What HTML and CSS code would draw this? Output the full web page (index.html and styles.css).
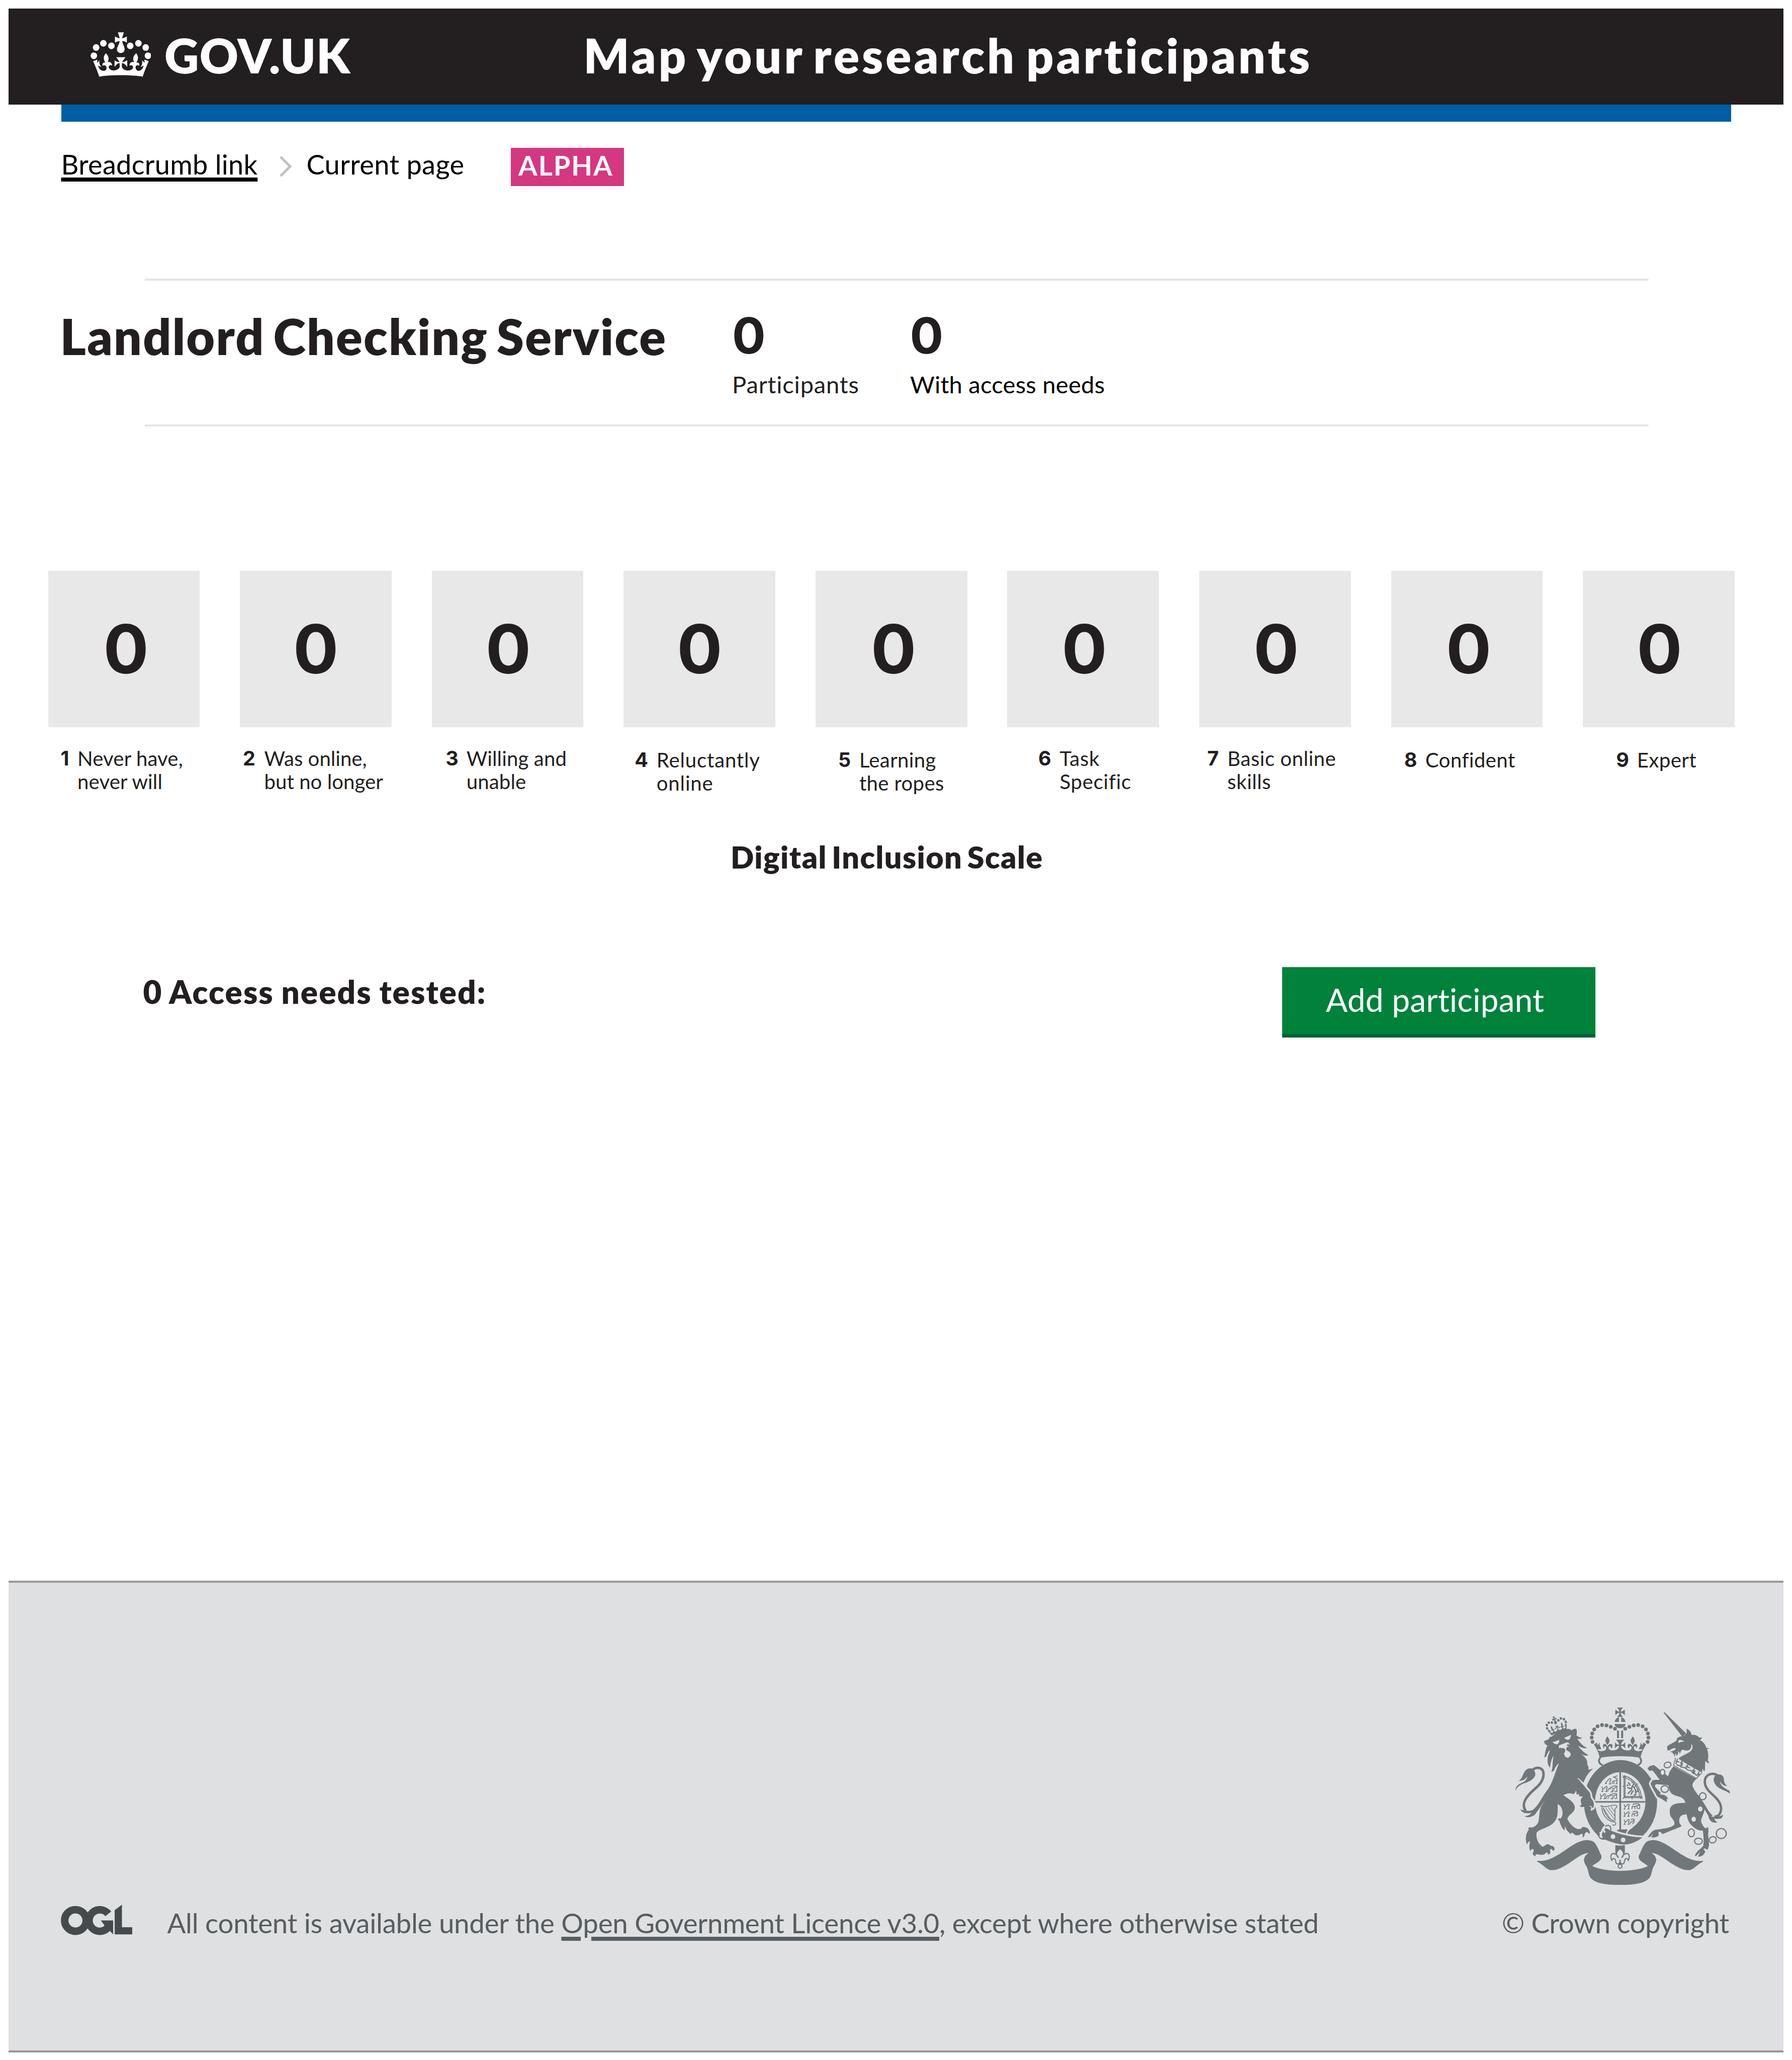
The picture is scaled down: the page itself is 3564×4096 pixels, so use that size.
FILE: index.html
```html
<!DOCTYPE html>
<html lang="en">
<head>
<meta charset="utf-8">
<title>Map your research participants</title>
<link rel="stylesheet" href="styles.css">
</head>
<body>
<header class="header">
  <a class="logo">
    <svg class="logo-crown" viewBox="81 82 325 320" preserveAspectRatio="none" aria-hidden="true">
      <g id="crown">
        <ellipse cx="150" cy="162" rx="17.5" ry="24"/><ellipse cx="193" cy="180" rx="17.5" ry="24"/><ellipse cx="111" cy="192" rx="17.5" ry="24"/><ellipse cx="99" cy="251" rx="17.5" ry="24"/>
        <ellipse cx="338" cy="162" rx="17.5" ry="24"/><ellipse cx="294" cy="180" rx="17.5" ry="24"/><ellipse cx="377" cy="192" rx="17.5" ry="24"/><ellipse cx="389" cy="251" rx="17.5" ry="24"/>
        <path d="M228 83H260L250 126C262 124 270 118 276 113V158C268 150 262 146 251 146C252 165 264 185 264 205C264 222 254 232 243 232C232 232 223 222 223 205C224 185 237 165 237 146C228 146 220 152 212 158V113C218 118 226 124 238 126Z"/>
        <path d="M95 290L118 279L116 302L130 283C126 300 128 312 140 333L122 322C125 345 138 360 152 360C168 358 172 335 162 323C155 316 148 320 146 324C142 305 152 298 162 300C150 285 148 255 163 234C180 252 182 280 172 298C185 292 197 302 197 322C190 317 184 318 180 326C174 342 190 357 207 357C225 355 240 340 238 325L237 304C228 302 222 312 210 331V283C220 295 228 296 237 296L219 262H269L250 296C260 296 268 292 278 283V331C268 315 262 304 250 304L249 325C249 343 262 357 282 357C300 357 314 342 308 328C304 318 298 317 290 322C290 302 300 292 316 298C306 280 308 252 326 234C340 254 338 285 326 300C338 298 346 306 342 324C338 318 332 316 326 322C318 338 326 358 338 360C352 358 362 345 366 322L349 333C360 312 360 300 357 283L371 302L370 279L393 290C385 318 368 370 361 402C325 387 165 387 128 402C122 375 105 320 95 290Z"/>
      </g>
    </svg>
    <span class="logo-text">GOV.UK</span>
  </a>
  <span class="header-title">Map your research participants</span>
</header>
<div class="header-bar"></div>

<nav class="breadcrumbs">
  <a class="crumb-link">Breadcrumb link</a>
  <svg class="chevron" viewBox="0 0 26 42" aria-hidden="true"><path d="M3 2L22 21L3 40"/></svg>
  <span class="crumb-current">Current page</span>
  <strong class="phase-tag">ALPHA</strong>
</nav>

<section class="summary">
  <h1 class="service-name">Landlord Checking Service</h1>
  <div class="stat"><span class="stat-value">0</span><span class="stat-label">Participants</span></div>
  <div class="stat stat-dark"><span class="stat-value">0</span><span class="stat-label">With access needs</span></div>
</section>

<main>
  <ol class="scale">
    <li class="level"><div class="tile">0</div><div class="level-label"><b>1</b><span>Never have,<br>never will</span></div></li>
    <li class="level"><div class="tile">0</div><div class="level-label"><b>2</b><span>Was online,<br>but no longer</span></div></li>
    <li class="level"><div class="tile">0</div><div class="level-label"><b>3</b><span>Willing and<br>unable</span></div></li>
    <li class="level low"><div class="tile">0</div><div class="level-label"><b>4</b><span>Reluctantly<br>online</span></div></li>
    <li class="level low"><div class="tile">0</div><div class="level-label"><b>5</b><span>Learning<br>the ropes</span></div></li>
    <li class="level"><div class="tile">0</div><div class="level-label"><b>6</b><span>Task<br>Specific</span></div></li>
    <li class="level"><div class="tile">0</div><div class="level-label"><b>7</b><span>Basic online<br>skills</span></div></li>
    <li class="level low"><div class="tile">0</div><div class="level-label"><b>8</b><span>Confident</span></div></li>
    <li class="level low"><div class="tile">0</div><div class="level-label"><b>9</b><span>Expert</span></div></li>
  </ol>
  <h2 class="scale-title">Digital Inclusion Scale</h2>
  <div class="actions">
    <h2 class="needs">0 Access needs tested:</h2>
    <a class="button" role="button">Add participant</a>
  </div>
</main>

<footer class="footer">
  <svg class="ogl" viewBox="46 62 516 220" role="img" aria-label="OGL">
    <circle class="ogl-ring" cx="151" cy="176" r="77.5"/>
    <path class="ogl-ring" d="M387 128.6A77.5 77.5 0 1 0 381 231"/>
    <path d="M333 176H422V276L398 251L362 235L358 208Z"/>
    <path d="M433 102L485 63V225H560V276H433Z"/>
  </svg>
  <p class="licence">All content is available under the <a class="licence-link">Open Government Licence v3.0</a>, except where otherwise stated</p>
  <div class="crest">
    <svg class="arms" viewBox="110 75 1560 1290" aria-hidden="true">
      <!-- garter and quartered shield -->
      <ellipse cx="872" cy="763" rx="263" ry="303"/>
      <ellipse class="bg" cx="870" cy="759" rx="181" ry="212"/>
      <path d="M690 755H1050V766H690ZM864 547H876V965H864Z"/>
      <g class="line">
        <path d="M722 738H736M730 738L732 720L726 704M732 720C744 724 746 706 756 704C766 702 768 714 758 718L762 738H750M798 722C800 706 804 700 810 712C816 722 830 716 844 706V736H830M802 738H816L812 724M824 722V734M812 706C826 696 844 700 844 706M770 738C768 722 776 712 786 720L796 708M780 738L788 726"/>
        <path d="M734 686H748M742 686L744 668L738 650M744 668C756 672 758 652 768 650C778 648 780 662 770 666L774 686H762M798 670C800 654 804 648 810 660C816 670 830 664 846 650V686H830M802 688H816L812 672M824 670V684M812 652C826 642 846 646 846 652M782 684C780 670 788 660 798 668"/>
        <path d="M760 628H774M768 628L770 614M770 614C782 618 780 598 792 594C806 590 806 606 796 610L800 632H788M812 632C812 616 818 606 826 612L846 604V630H836M824 632V616M846 604C858 586 830 594 820 580C830 586 840 576 850 572"/>
        <path d="M897 580V730H1022M905 588V722H1010M897 574C970 590 1018 660 1022 730M905 590C965 604 1005 660 1010 722M888 572L910 588M888 588L906 570M888 738L908 722M1012 738L1030 722M1012 722L1030 738M886 650H908M955 718V742M978 640L996 630"/>
        <path d="M926 622C934 626 940 636 940 644M952 622C966 614 972 630 962 640L950 660C944 668 930 662 920 656M950 660C958 676 944 684 932 694L926 704M960 650C976 660 990 690 978 712L966 712M972 652L986 646M966 680C950 690 956 704 944 706M976 690C1000 690 1000 670 990 660M930 640L916 642" stroke-width="9"/>
        <path d="M728 788C770 806 800 782 836 784C852 786 846 802 836 806M738 798C740 850 770 900 832 906C846 920 830 936 814 924M832 806V900M748 802C760 850 790 890 826 896"/>
        <path d="M764 802L828 886M784 800L830 862M804 796L830 832M750 808L800 884" stroke-width="4"/>
        <g transform="translate(894 922) scale(.97 1) translate(-722 -738)">
          <path d="M722 738H736M730 738L732 720L726 704M732 720C744 724 746 706 756 704C766 702 768 714 758 718L762 738H750M770 738C770 722 778 716 784 722L800 706V722L788 736M776 706C786 696 800 700 802 706"/>
          <path d="M722 680H736M730 680L732 664L726 648M732 664C744 668 746 650 756 648C766 646 768 658 758 662L762 680H750M784 682C784 664 790 654 798 664L826 652V676H812M802 680V664M790 650C806 640 826 644 826 652"/>
          <path d="M722 628H736M730 628L732 610L726 594M732 610C744 614 746 596 756 594C766 592 768 606 758 610L762 628H750M784 628C784 610 790 600 798 612L842 598V624H828M806 628V612M822 626V608M790 594C806 588 842 590 842 598"/>
        </g>
      </g>
      <path d="M846 966C866 950 890 962 920 957L912 990L870 980Z"/>
      <path class="bg-line" d="M915 992C920 966 935 955 960 940" stroke-width="10"/>
      <path class="halo" d="M760 945C830 985 930 1014 1030 1016C985 1050 940 1067 890 1067C840 1062 790 1045 728 1016C745 1000 735 975 760 945Z"/>
      <circle class="bg" cx="818" cy="1010" r="17"/><circle class="bg" cx="891" cy="1034" r="17"/>
      <path class="bg-line" d="M724 978C736 990 726 1004 740 1018M762 948C744 950 750 972 762 980" stroke-width="13"/>
      <path class="line" d="M764 938C778 918 808 934 802 964M724 958C698 985 712 1034 760 1028" stroke-width="8"/>
      <!-- crown and ribbon, drawn as mirrored halves -->
      <g id="half">
        <circle cx="671" cy="330" r="13.5"/><circle cx="665" cy="299" r="13.5"/><circle cx="669" cy="269" r="13.5"/><circle cx="683" cy="240" r="13.5"/><circle cx="707" cy="218" r="13.5"/><circle cx="739" cy="209" r="13.5"/><circle cx="771" cy="211" r="13.5"/><circle cx="802" cy="221" r="13.5"/><circle cx="832" cy="235" r="13.5"/>
        <path d="M870 83H847C860 93 863 105 865 113C853 112 845 106 835 97V138C845 128 853 121 865 120C863 130 860 140 847 150H870ZM861 153C845 155 832 170 830 186H861ZM829 201H870V231C848 231 833 220 829 201ZM847 246L861 250V303H847Z"/>
        <path d="M681 349L702 334L708 355L722 333C720 355 728 368 736 381L706 383C712 395 740 402 760 390C772 383 772 366 765 361C758 358 753 364 755 376C742 368 742 348 757 344C768 343 772 352 776 362H780C784 350 795 340 808 345C820 355 816 370 803 377C804 363 798 358 791 362C782 370 784 390 815 391C840 392 862 380 862 358C850 357 842 364 832 377V332C842 343 850 350 862 349C860 335 852 325 838 314H870V433C820 432 770 434 722 444C718 415 700 375 681 349Z"/>
        <path d="M777 290C768 305 762 315 764 324C768 338 774 345 778 352C784 345 792 335 794 320C791 310 785 300 777 290Z"/>
        <path class="line" d="M728 441C708 465 718 488 745 497" stroke-width="13"/>
        <path d="M272 1183C350 1195 420 1145 500 1090C560 1050 620 1018 675 1045C700 1060 715 1110 734 1145C745 1185 690 1200 669 1222C720 1245 790 1256 870 1256V1357C760 1357 690 1345 656 1305C638 1275 642 1245 625 1220C600 1180 605 1155 642 1127C590 1130 540 1180 480 1215C430 1245 400 1254 365 1250C330 1238 310 1205 275 1191Z"/>
        <path d="M835 1071L870 1076V1100C858 1110 845 1124 847 1138L852 1150L835 1140Z"/>
        <path class="line" d="M836 1138C812 1118 792 1146 810 1180C818 1158 836 1166 838 1190C842 1212 856 1210 869 1196" stroke-width="8"/>
        <path d="M842 1135C856 1145 862 1158 858 1164C848 1164 842 1150 842 1135ZM864 1176H870V1210H864Z"/>
      </g>
      <use href="#half" transform="translate(1738 0) scale(-1 1)"/>
      <circle class="line bg-fill" cx="869" cy="1223" r="14" stroke-width="8"/>
      <!-- lion -->
      <use href="#crown" transform="translate(410 206) rotate(-19) scale(.49 .39) translate(-243 -242)"/>
      <path class="halo" d="M557 592L572 600L648 690C658 705 655 725 662 738C674 752 682 768 679 778C680 795 676 803 670 806C668 795 660 790 650 788L600 700Z"/>
      <path d="M322 326C338 314 358 316 360 303C364 294 368 290 374 294C410 262 450 250 495 236L516 240L514 248C530 240 545 232 555 237C559 255 560 268 555 282C570 296 582 300 597 297C590 308 575 310 562 307C580 335 605 362 632 374C610 380 590 370 565 356C590 388 615 412 642 424C625 434 605 425 588 415C612 435 630 450 633 475L634 494C642 505 643 515 642 530C652 528 662 524 675 523C645 545 622 580 606 622L572 592L557 592L648 690C656 705 655 725 662 738C674 750 682 765 679 780C680 795 678 803 671 806C670 795 662 784 652 788C640 796 668 794 662 808C654 814 645 802 636 796C626 796 634 806 636 813C622 812 614 804 612 794C598 802 582 798 578 785C588 790 596 780 588 765C582 745 592 730 603 722C590 722 580 722 574 718L572 702L558 710L552 676C548 695 540 704 533 705C510 694 485 698 462 713C500 740 545 765 544 805C540 840 500 850 490 882C505 915 540 955 575 956C590 955 592 950 596 942C620 938 650 950 653 985L645 992C642 980 635 975 626 978C612 984 618 995 606 1016L598 1008C604 996 600 988 588 990C580 1002 560 1002 545 998C535 990 530 984 523 982C516 984 518 990 518 994C500 980 480 965 474 936C470 945 472 955 470 966C445 945 440 915 432 896L421 886C428 876 438 882 446 876C462 850 460 795 421 777C420 830 425 870 400 900C370 945 300 950 270 980C262 1020 280 1065 313 1083C330 1078 335 1064 350 1065C362 1066 368 1075 372 1077C385 1074 400 1085 398 1100C394 1110 388 1114 384 1112C385 1100 375 1095 368 1102C362 1112 372 1118 366 1130C360 1140 354 1140 350 1136C352 1126 342 1120 334 1128C322 1145 300 1142 282 1138C265 1135 255 1138 264 1151C250 1150 238 1140 243 1125C250 1115 252 1100 240 1100C228 1100 228 1108 224 1114C212 1095 218 1065 222 1042C210 1045 206 1055 200 1067C186 1030 190 990 213 960C208 950 212 942 217 943C240 948 262 940 280 910C292 870 284 830 302 795L332 745C305 785 285 815 268 836C250 870 210 878 182 864C205 862 225 852 232 840C200 845 165 845 153 813C170 825 215 828 240 820C280 790 300 740 340 684C385 625 398 560 430 482C410 500 400 515 395 535L375 548C388 510 380 480 392 428C370 460 370 490 366 515C345 495 345 455 352 430C358 410 365 400 365 388C350 400 342 425 336 438L324 440C332 420 330 380 348 357C335 350 325 342 322 326Z"/>
      <path class="bg" d="M382 331C400 328 415 322 432 314C432 335 425 347 410 347C398 344 392 338 382 331ZM467 300C485 293 500 288 516 278C514 300 508 314 492 315C480 313 474 306 467 300ZM428 356L485 333C500 334 506 343 508 350C498 344 488 346 486 352C490 362 500 360 502 366C488 360 478 374 482 386C492 398 514 400 515 422C508 438 498 444 490 443C475 440 468 428 466 410C478 400 476 388 472 380C462 370 452 374 446 377C446 370 440 366 434 377C428 374 430 364 428 356Z"/>
      <path class="line" d="M238 530C285 500 325 520 318 575C308 640 250 665 215 708C172 755 168 790 190 825" stroke-width="18"/>
      <path d="M118 683C116 652 130 640 160 625C185 615 198 600 203 578C190 592 178 612 140 608C165 595 165 575 180 548C195 520 220 515 237 524C265 540 265 570 250 585C225 622 175 622 145 645C130 655 120 670 118 683Z"/>
      <!-- unicorn -->
      <g transform="translate(870 0)">
        <path class="halo" d="M345 640L262 632C245 640 248 645 250 652L290 695L285 710C310 705 335 715 345 743L335 735L333 762L300 740L266 722C255 700 230 660 219 630C225 612 235 605 240 603L283 602Z"/>
        <path d="M311 118L320 117L475 270L445 292Z"/>
        <path d="M440 290C460 285 478 275 477 262C480 250 478 242 475 235C495 240 510 260 513 280C540 276 556 286 566 296C575 300 580 299 587 298C585 310 578 315 570 315C600 330 612 350 618 370C625 376 632 375 638 374C634 382 628 380 623 380C635 410 633 440 630 463L640 481C628 482 618 475 612 465C607 490 612 515 607 540C598 540 598 530 592 522L588 545L578 552L418 450C450 420 518 410 520 368C520 355 515 346 511 346C513 372 505 392 478 392C460 392 452 382 442 388C432 400 432 405 432 413C424 414 424 395 416 398C420 420 408 428 400 428C406 412 400 410 396 420L390 437C388 430 388 422 384 418C382 408 376 414 370 412L380 404L358 404C372 392 396 392 400 378C390 370 365 380 360 388L341 393C340 385 336 375 337 362C360 342 390 335 405 318C405 300 420 292 440 290Z"/>
        <path class="bg" d="M417 335C416 310 435 310 461 327C445 330 432 328 425 336Z"/>
        <path class="bg-fill line" d="M398 444L384 498L547 592L588 550" stroke-width="6"/>
        <path class="line" d="M412 452L400 488M398 468L424 474M446 456L436 505M430 478C446 474 448 486 434 490M452 486C442 486 438 498 448 500M486 492L472 526M470 502L502 518M534 508L524 560M516 534C532 528 534 540 520 546M540 538C530 540 528 552 538 554M568 540L556 575M552 560L574 564M404 492C420 504 430 494 434 506C446 522 462 506 472 520C490 544 502 526 512 540C520 560 540 550 550 574" stroke-width="8"/>
        <path d="M383 505L547 596C530 610 520 625 518 642C535 690 570 720 595 760C620 800 640 840 665 860L640 870C625 850 615 830 607 815C600 850 578 880 582 905C590 930 605 945 612 950C625 950 624 940 632 942L634 970C626 1010 642 1050 637 1078L628 1104L620 1103C618 1094 598 1092 598 1103C605 1106 610 1112 610 1122C600 1145 580 1156 558 1154L575 1118L545 1150L536 1148C550 1110 580 1100 597 1075C602 1040 598 1000 594 967C560 970 530 950 500 915C485 890 480 870 478 850C450 850 425 860 424 890C422 912 430 922 440 930L436 938L304 992C298 982 286 972 275 977C272 985 277 990 277 1000C268 1014 250 1018 222 1015L238 988L212 1014L198 1012C215 990 230 965 255 960C310 955 370 945 388 925C398 900 370 880 360 860C345 790 370 768 470 768C450 712 410 730 370 702C350 680 350 660 345 640L262 632C245 634 248 645 252 655C265 675 275 682 290 695L285 710C310 705 335 715 345 743L335 735L333 762L300 740L266 722C260 700 230 660 219 630C225 612 235 605 240 603L284 602C265 580 245 545 230 535L210 538L196 520C205 505 225 495 245 498L345 578C350 545 365 530 383 505Z"/>
        <path class="line" d="M697 568C650 545 603 570 608 625C615 690 700 720 720 780C735 830 710 870 676 866" stroke-width="17"/>
        <path d="M690 565C720 560 742 565 745 600C748 625 755 640 770 643C750 650 730 636 718 612C715 640 750 665 785 680L789 704C770 680 700 670 680 630C665 600 670 580 690 565ZM632 850C660 880 710 870 740 853C735 880 720 885 700 882C690 885 683 880 676 882C680 895 690 905 702 905C665 922 634 895 632 850Z"/>
        <g class="line bg-fill" stroke-width="8">
          <ellipse cx="340" cy="495" rx="25" ry="20" transform="rotate(-20 340 495)"/><ellipse cx="304" cy="549" rx="17" ry="22"/><ellipse cx="320" cy="668" rx="27" ry="24"/><ellipse cx="593" cy="720" rx="24" ry="25"/><ellipse cx="511" cy="983" rx="22" ry="28"/><ellipse cx="562" cy="1043" rx="28" ry="22"/><ellipse cx="664" cy="1033" rx="26" ry="22" transform="rotate(-20 664 1033)"/><circle cx="726" cy="988" r="36"/>
        </g>
        <ellipse class="bg" cx="575" cy="812" rx="16" ry="18"/><ellipse class="bg" cx="528" cy="885" rx="16" ry="18"/>
      </g>
    </svg>
    <p class="copyright">© Crown copyright</p>
  </div>
</footer>
</body>
</html>
```
FILE: styles.css
```css
* { box-sizing: border-box; }

body {
  margin: 0;
  width: 3564px;
  height: 4096px;
  overflow: hidden;
  background: #fff;
  color: #231f20;
  font-family: Lato, "Open Sans", sans-serif;
  font-variant-ligatures: none;
  white-space: nowrap;
}

h1, h2, p, ol { margin: 0; padding: 0; font-weight: inherit; }

/* Header */
.header {
  display: flex;
  align-items: flex-start;
  height: 190.6px;
  margin: 17px 17px 0;
  padding-left: 162.5px;
  background: #231f20;
  color: #fff;
  font-size: 95px;
  font-weight: 800;
  line-height: 100px;
}
.logo { display: flex; align-items: flex-start; width: 981px; }
.logo-crown { width: 120.5px; height: 88.6px; margin: 47.2px 27px 0 0; fill: #fff; }
.logo-text, .header-title { margin-top: 42.4px; }
.logo-text { letter-spacing: 1px; }
.header-title { letter-spacing: 4.95px; word-spacing: -8px; }
.header-bar { height: 34.7px; margin: 0 121.5px; background: #005ea5; }

/* Breadcrumbs */
.breadcrumbs {
  display: flex;
  align-items: flex-start;
  height: 78.4px;
  margin: 49.7px 0 0 121.5px;
  color: #000;
  font-size: 54.2px;
  line-height: 66px;
}
.crumb-link {
  width: 390px;
  margin-top: 2px;
  letter-spacing: .25px;
  text-decoration: underline;
  text-decoration-thickness: 7.5px;
  text-underline-offset: 6px;
}
.chevron { width: 26px; height: 42px; margin: 18.5px 29px 0 43px; fill: none; stroke: #bfc1c3; stroke-width: 5; }
.crumb-current { width: 406px; margin-top: 2px; letter-spacing: .35px; }
.phase-tag {
  width: 225.1px;
  height: 76.4px;
  margin-top: 2px;
  padding-left: 15.5px;
  background: #d53880;
  color: #fff;
  font-weight: 700;
  letter-spacing: 2px;
  line-height: 70px;
}

/* Service summary */
.summary {
  display: grid;
  grid-template-columns: 1336.6px 352.4px auto;
  height: 294.4px;
  margin-top: 183.6px;
  padding: 54.7px 0 0 119.5px;
  background:
    linear-gradient(#e4e4e4, #e4e4e4) 287.7px 0 / 2990.5px 4px no-repeat,
    linear-gradient(#e4e4e4, #e4e4e4) 287.7px 290.4px / 2990.5px 4px no-repeat;
}
.service-name { font-size: 98px; font-weight: 800; line-height: 118px; letter-spacing: 2.2px; word-spacing: -8px; }
.stat { display: flex; flex-direction: column; align-items: flex-start; margin-top: -1.6px; }
.stat-value { font: 700 99px/120px Inter, sans-serif; }
.stat-label { margin-top: 8px; font-size: 47.2px; line-height: 57px; letter-spacing: .75px; }
.stat-dark .stat-value { margin-left: 1px; }
.stat-dark .stat-label { margin-left: 1.5px; color: #000; letter-spacing: .2px; }

/* Digital inclusion scale */
.scale {
  display: grid;
  grid-template-columns: repeat(9, 381.6px);
  height: 443.8px;
  margin: 286.5px 0 0 95.5px;
  list-style: none;
}
.tile {
  width: 301.8px;
  height: 311.4px;
  padding: 75px 0 0 var(--value-x);
  background: #e8e8e8;
  font: 700 134px/160px Inter, sans-serif;
}
.level-label {
  display: flex;
  margin: 38.5px 0 0 var(--label-x);
  font-size: 40.2px;
  letter-spacing: var(--tracking, .1px);
  line-height: 46px;
}
.low .level-label { margin-top: 41.8px; }
.level-label b { width: var(--number-w); font: 700 39.5px/46px Inter, sans-serif; }
.level:nth-child(1) { --value-x: 110px; --label-x: 25px; --number-w: 33.5px; }
.level:nth-child(2) { --value-x: 106px; --label-x: 6px; --number-w: 42.5px; --tracking: 0; }
.level:nth-child(3) { --value-x: 107px; --label-x: 27.5px; --number-w: 41.5px; }
.level:nth-child(4) { --value-x: 106px; --label-x: 22px; --number-w: 43.5px; --tracking: .8px; }
.level:nth-child(5) { --value-x: 110px; --label-x: 45px; --number-w: 42px; --tracking: .3px; }
.level:nth-child(6) { --value-x: 108px; --label-x: 61.5px; --number-w: 42.5px; --tracking: .7px; }
.level:nth-child(7) { --value-x: 108px; --label-x: 16px; --number-w: 40px; --tracking: .5px; }
.level:nth-child(8) { --value-x: 109px; --label-x: 26px; --number-w: 42px; --tracking: .4px; }
.level:nth-child(9) { --value-x: 107px; --label-x: 66px; --number-w: 41.5px; --tracking: .4px; }

.scale-title {
  margin: 88.2px 0 0 1453px;
  font-size: 61px;
  font-weight: 800;
  letter-spacing: 1.4px;
  line-height: 74px;
  word-spacing: -6px;
}

/* Actions */
.actions {
  display: flex;
  justify-content: space-between;
  align-items: flex-start;
  margin-top: 182.1px;
  padding: 0 391.3px 0 284.5px;
}
.needs { margin-top: 11px; font-size: 63.8px; font-weight: 800; line-height: 76px; letter-spacing: 2px; word-spacing: -2px; }
.button {
  width: 622.7px;
  height: 139.7px;
  padding: 27px 0 0 87px;
  border-bottom: 7.5px solid #006435;
  background: #00823b;
  color: #fff;
  font-size: 64px;
  letter-spacing: .15px;
  line-height: 76px;
}

/* Footer */
.footer {
  display: flex;
  align-items: flex-end;
  height: 938.3px;
  margin: 1080.3px 17px 0;
  padding: 0 103.7px 221px;
  border: solid #999;
  border-width: 4px 0;
  background: #dee0e2;
  color: #575d60;
  font-size: 54.7px;
  letter-spacing: -.28px;
  line-height: 66px;
}
.ogl { width: 142.8px; height: 60.9px; margin: 0 69px 8px 0; fill: #454b4d; }
.ogl-ring { fill: none; stroke: #454b4d; stroke-width: 54; }
.licence-link { text-decoration: underline; text-decoration-thickness: 7.5px; text-underline-offset: 6.5px; }
.crest { display: flex; flex-direction: column; width: 456.6px; margin-left: auto; }
.arms { align-self: flex-end; width: 431.8px; height: 357.1px; margin-bottom: 40.5px; fill: #6f777b; }
.arms .bg { fill: #dee0e2; }
.arms .line { fill: none; stroke: #6f777b; }
.arms .bg-line { fill: none; stroke: #dee0e2; }
.arms .bg-fill { fill: #dee0e2; }
.arms .halo { stroke: #dee0e2; stroke-width: 26; paint-order: stroke; }
.arms g.line { stroke-width: 6; }
.arms g.bg-fill { stroke-width: 8; }
.copyright { letter-spacing: -.4px; }
```
